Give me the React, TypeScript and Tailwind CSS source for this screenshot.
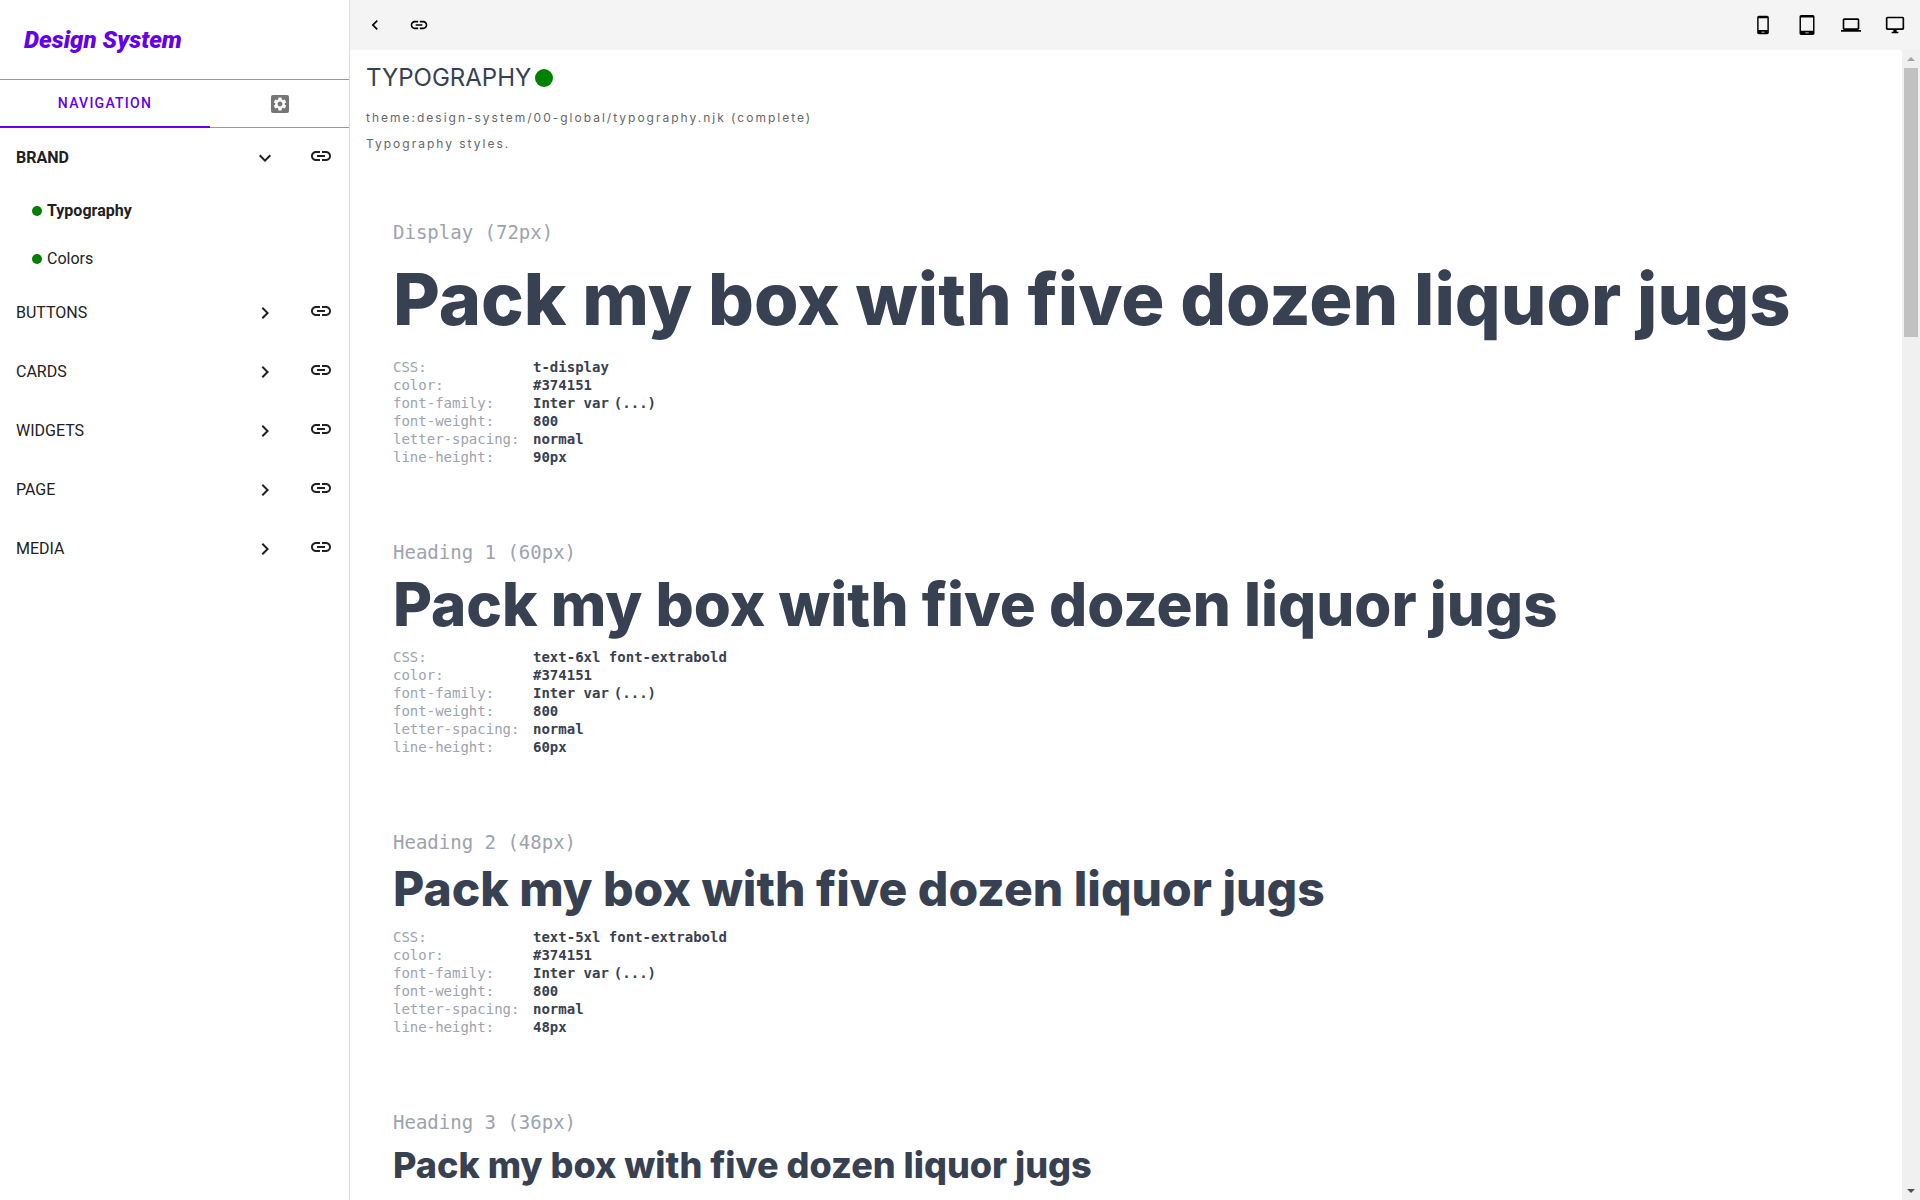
import type { ReactNode } from 'react';
import { MdChevronLeft, MdChevronRight, MdExpandMore, MdLaptop, MdLink, MdSettings } from 'react-icons/md';

const SAMPLE = 'Pack my box with five dozen liquor jugs';

const groups = [
  { name: 'BRAND', open: true, items: ['Typography', 'Colors'] },
  { name: 'BUTTONS', open: false, items: [] },
  { name: 'CARDS', open: false, items: [] },
  { name: 'WIDGETS', open: false, items: [] },
  { name: 'PAGE', open: false, items: [] },
  { name: 'MEDIA', open: false, items: [] },
];

const styles = [
  { label: 'Display (72px)', css: 't-display', line: '90px', text: 'text-[72px] leading-[90px]' },
  { label: 'Heading 1 (60px)', css: 'text-6xl font-extrabold', line: '60px', text: 'text-[60px] leading-[60px]' },
  { label: 'Heading 2 (48px)', css: 'text-5xl font-extrabold', line: '48px', text: 'text-[48px] leading-[50px]' },
  { label: 'Heading 3 (36px)', css: '', line: '', text: 'text-[36px] leading-[42px]' },
];

function Glyph({ size, d }: { size: number; d: string }) {
  return (
    <svg width={size} height={size} viewBox="0 0 24 24" fill="currentColor" aria-hidden="true">
      <path fillRule="evenodd" d={d} />
    </svg>
  );
}

const devices: { name: string; icon: ReactNode }[] = [
  {
    name: 'Phone',
    icon: <Glyph size={20} d="M17 1H7c-1.1 0-2 .9-2 2v18c0 1.1.9 2 2 2h10c1.1 0 2-.9 2-2V3c0-1.1-.9-2-2-2zm-3 20h-4v-1h4v1zm3.25-3H6.75V4h10.5v14z" />,
  },
  {
    name: 'Tablet',
    icon: <Glyph size={20} d="M19 0H5C3.9 0 3 .9 3 2v20c0 1.1.9 2 2 2h14c1.1 0 2-.9 2-2V2c0-1.1-.9-2-2-2zm-5 22h-4v-1h4v1zm5.25-3H4.75V3h14.5v16z" />,
  },
  { name: 'Laptop', icon: <MdLaptop size={20} /> },
  {
    name: 'Desktop',
    icon: <Glyph size={20} d="M21 2H3c-1.1 0-2 .9-2 2v12c0 1.1.9 2 2 2h7v2H8v2h8v-2h-2v-2h7c1.1 0 2-.9 2-2V4c0-1.1-.9-2-2-2zm0 14H3V4h18v12z" />,
  },
];

function Sidebar() {
  return (
    <aside className="flex w-[350px] shrink-0 flex-col border-r border-[#dddddd] font-[Roboto,sans-serif] text-[#212121]">
      <header className="flex h-20 items-center border-b border-[#999999] px-6">
        <a href="#home" className="text-2xl font-black italic text-[#6200ee]">Design System</a>
      </header>
      <div role="tablist" className="flex h-12 border-b border-[#999999]">
        <button role="tab" aria-selected="true" className="-mb-px w-[210px] border-b-2 border-[#6200ee] text-sm font-medium tracking-[1.25px] text-[#6200ee]">
          NAVIGATION
        </button>
        <button role="tab" aria-selected="false" aria-label="Settings" className="flex flex-1 items-center justify-center">
          <span className="flex size-[18px] items-center justify-center rounded-xs bg-[#757575] text-white">
            <MdSettings size={16} />
          </span>
        </button>
      </div>
      <nav>
        {groups.map((g) => (
          <section key={g.name}>
            <div className="flex h-[59px] items-center px-4">
              <button aria-expanded={g.open} className={`flex flex-1 items-center justify-between text-left ${g.open ? 'font-bold' : ''}`}>
                {g.name}
                {g.open ? <MdExpandMore size={24} /> : <MdChevronRight size={24} />}
              </button>
              <a href={`#${g.name}`} aria-label={`Open ${g.name}`} className="mb-1 ml-8">
                <MdLink size={24} />
              </a>
            </div>
            {g.items.map((item, i) => (
              <a key={item} href={`#${item}`} className={`flex h-12 items-center gap-[5px] pl-8 ${i === 0 ? 'font-bold' : ''}`}>
                <span className="size-2.5 rounded-full bg-[#008000]" />
                {item}
              </a>
            ))}
          </section>
        ))}
      </nav>
    </aside>
  );
}

function Toolbar() {
  return (
    <div className="flex h-[50px] shrink-0 items-center justify-between bg-[#f4f4f4] px-[15px] text-black">
      <div className="flex gap-6">
        <button aria-label="Collapse navigation"><MdChevronLeft size={20} /></button>
        <a href="#link" aria-label="Open in new window"><MdLink size={20} /></a>
      </div>
      <div className="flex gap-6">
        {devices.map(({ name, icon }) => (
          <button key={name} aria-label={name}>{icon}</button>
        ))}
      </div>
    </div>
  );
}

function Row({ name, value, extra }: { name: string; value: string; extra?: string }) {
  return (
    <div className="flex">
      <dt className="w-[140px] text-[#9ca3af]">{name}:</dt>
      <dd className="flex gap-[5px] font-bold">
        <span>{value}</span>
        {extra && <span>{extra}</span>}
      </dd>
    </div>
  );
}

function Scrollbar() {
  return (
    <div aria-hidden="true" className="flex w-[18px] shrink-0 flex-col items-center bg-[#f0f0f0]">
      <div className="flex h-[18px] shrink-0 items-center">
        <svg width="8" height="4" viewBox="0 0 8 4" fill="#a3a3a3"><path d="M4 0 8 4H0z" /></svg>
      </div>
      <div className="h-[269px] w-3.5 bg-[#c1c1c1]" />
      <div className="mt-auto flex h-[18px] shrink-0 items-center">
        <svg width="8" height="4" viewBox="0 0 8 4" fill="#505050"><path d="M0 0h8L4 4z" /></svg>
      </div>
    </div>
  );
}

export default function App() {
  return (
    <div className="flex h-screen overflow-hidden bg-white">
      <Sidebar />
      <div className="flex min-w-0 flex-1 flex-col">
        <Toolbar />
        <div className="flex min-h-0 flex-1">
          <main className="min-w-0 flex-1 overflow-hidden px-4 pt-3 font-[Inter,sans-serif] text-[#374151]">
            <h1 className="flex items-center gap-1 text-2xl font-normal leading-8">
              TYPOGRAPHY
              <span className="size-[18px] rounded-full bg-[#008000]" />
            </h1>
            <div className="mt-[11px] text-xs leading-[26px] tracking-[2px] text-[#666666]">
              <p>theme:design-system/00-global/typography.njk (complete)</p>
              <p>Typography styles.</p>
            </div>
            <div className="mt-[61px] flex flex-col gap-[72px] px-[27px]">
              {styles.map((s) => (
                <section key={s.label}>
                  <h2 className="font-['DejaVu_Sans_Mono',monospace] text-[19px] leading-7 text-[#9ca3af]">{s.label}</h2>
                  <p className={`mb-3.5 mt-2 whitespace-nowrap font-extrabold ${s.text}`}>{SAMPLE}</p>
                  {s.css && (
                    <dl className="font-['DejaVu_Sans_Mono',monospace] text-sm leading-[18px]">
                      <Row name="CSS" value={s.css} />
                      <Row name="color" value="#374151" />
                      <Row name="font-family" value="Inter var" extra="(...)" />
                      <Row name="font-weight" value="800" />
                      <Row name="letter-spacing" value="normal" />
                      <Row name="line-height" value={s.line} />
                    </dl>
                  )}
                </section>
              ))}
            </div>
          </main>
          <Scrollbar />
        </div>
      </div>
    </div>
  );
}
